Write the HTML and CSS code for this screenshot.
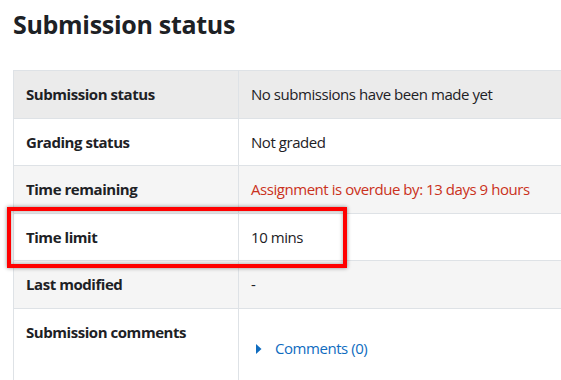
FILE: index.html
```html
<!DOCTYPE html>
<html lang="en">

<head>
  <link rel="stylesheet" href="styles.css">
</head>

<body>
  <h2 class="page-title">Submission status</h2>

  <div class="status-wrap">
    <div class="table-clip">
      <table class="status-table">
        <tr class="row-hover">
          <th>Submission status</th>
          <td>No submissions have been made yet</td>
        </tr>
        <tr>
          <th>Grading status</th>
          <td>Not graded</td>
        </tr>
        <tr class="row-odd">
          <th>Time remaining</th>
          <td class="overdue">Assignment is overdue by: 13 days 9 hours</td>
        </tr>
        <tr>
          <th>Time limit</th>
          <td>10 mins</td>
        </tr>
        <tr class="row-odd">
          <th>Last modified</th>
          <td>-</td>
        </tr>
        <tr>
          <th>Submission comments</th>
          <td>
            <div class="comments">
              <a href="#" class="comments-link">
                <svg class="caret" width="6" height="10" viewBox="0 0 6 10"><path d="M0 0 L5.5 5 L0 10 Z" fill="#0f6cbf"/></svg>
                Comments (0)
              </a>
            </div>
          </td>
        </tr>
      </table>
    </div>

    <!-- annotation box drawn over the screenshot -->
    <div class="highlight"></div>
  </div>
</body>

</html>
```

FILE: styles.css
```css
body {
  font-family: 'Open Sans', 'Noto Sans', sans-serif;
  background-color: #fff;
  margin: 0;
  padding: 0 0 0 13px;
  color: #1d2125; /* Moodle dark text */
  overflow: hidden;
}

.page-title {
  font-size: 25px;
  font-weight: 700;
  margin: 6px 0 0;
  line-height: 37px;
  letter-spacing: -0.3px;
}

.status-wrap {
  position: relative;
  margin-top: 27px;
}

.table-clip {
  overflow: hidden;
}

.status-table {
  border-collapse: collapse;
  width: calc(100% + 40px);
  font-size: 15px;
  line-height: 22.5px;
  letter-spacing: -0.45px;
}

.status-table th,
.status-table td {
  border: 1px solid #dee2e6; /* Light gray grid */
  padding: 12px 12px;
  text-align: left;
  vertical-align: top;
}

.status-table th {
  width: 200px;
  font-weight: 700;
}

.status-table td {
  font-weight: 400;
}

.row-hover {
  background-color: #ebebeb;
}

.row-odd {
  background-color: #f5f5f5;
}

.overdue {
  color: #ca3120; /* Red warning text */
}

.comments {
  padding: 16px 0 24px;
}

.comments-link {
  color: #0f6cbf;
  text-decoration: none;
  display: inline-flex;
  align-items: center;
}

.caret {
  margin: 0 13px 0 5px;
}

.highlight {
  position: absolute;
  left: -6px;
  top: 137px;
  width: 332px;
  height: 53px;
  border: 4px solid #f00;
  box-shadow: 0 0 4px rgba(0, 0, 0, 0.45), inset 0 0 4px rgba(0, 0, 0, 0.35);
}
```
